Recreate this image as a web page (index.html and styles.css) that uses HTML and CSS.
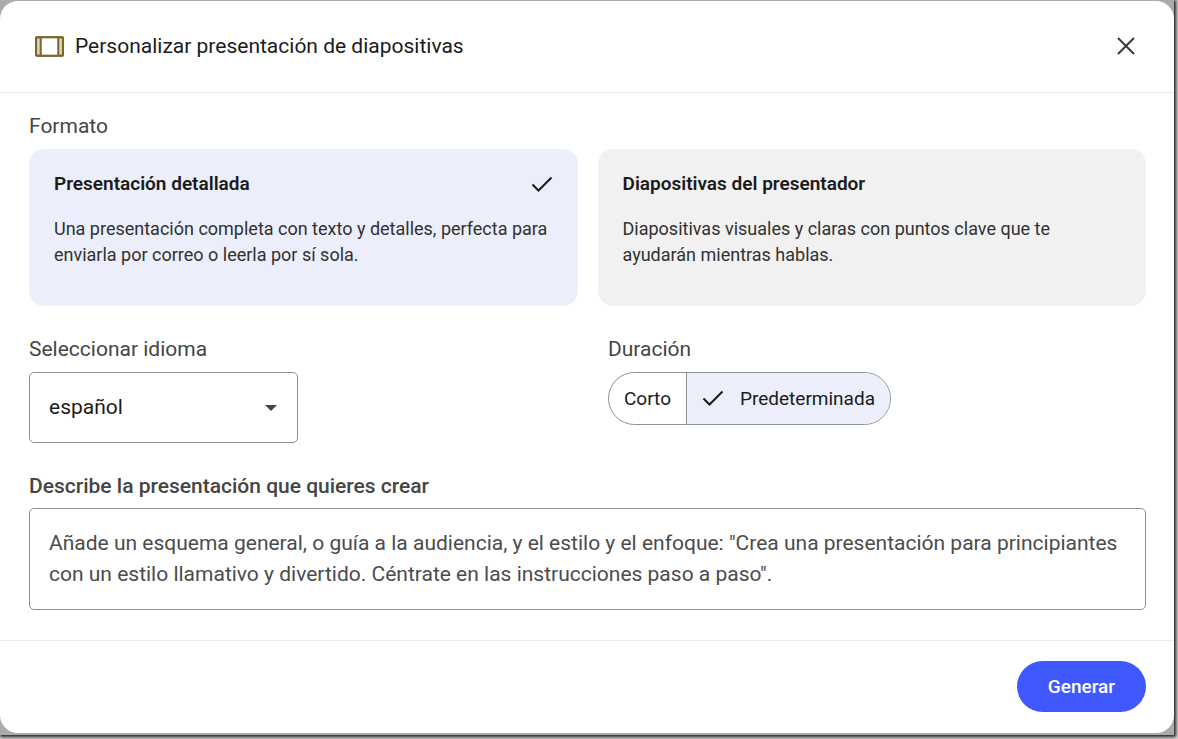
FILE: index.html
```html
<!DOCTYPE html>
<html lang="es">
<head>
<meta charset="utf-8">
<meta name="viewport" content="width=device-width, initial-scale=1">
<title>Personalizar presentación de diapositivas</title>
<link rel="stylesheet" href="styles.css">
</head>
<body>
<div class="backdrop">
  <form class="dialog" role="dialog" aria-labelledby="dialog-title">
    <header class="header">
      <svg class="slides-icon" viewBox="0 0 28 20" aria-hidden="true">
        <rect class="slides-fill" x="1" y="1" width="26" height="18" rx="1"/>
        <rect class="slides-page" x="6" y="2" width="16" height="16"/>
        <rect x="1" y="1" width="26" height="18" rx="1"/>
        <path d="M5.500 1v18M22.500 1v18"/>
      </svg>
      <h1 class="title" id="dialog-title">Personalizar presentación de diapositivas</h1>
      <button class="close" type="button" aria-label="Cerrar">
        <svg viewBox="0 0 18 18" aria-hidden="true"><path d="M1 1l16 16M17 1L1 17"/></svg>
      </button>
    </header>

    <main class="content">
      <fieldset class="group">
        <legend class="label">Formato</legend>
        <div class="cards">
          <label class="card">
            <input class="hidden-input" type="radio" name="formato" checked>
            <span class="card-head">
              <span class="card-title">Presentación detallada</span>
              <svg class="check" viewBox="0 0 22 16" aria-hidden="true"><path d="M1.500 8.500l6 6L20.500 1.500"/></svg>
            </span>
            <span class="card-text">Una presentación completa con texto y detalles, perfecta para enviarla por correo o leerla por sí sola.</span>
          </label>
          <label class="card">
            <input class="hidden-input" type="radio" name="formato">
            <span class="card-head">
              <span class="card-title">Diapositivas del presentador</span>
              <svg class="check" viewBox="0 0 22 16" aria-hidden="true"><path d="M1.500 8.500l6 6L20.500 1.500"/></svg>
            </span>
            <span class="card-text">Diapositivas visuales y claras con puntos clave que te ayudarán mientras hablas.</span>
          </label>
        </div>
      </fieldset>

      <div class="options">
        <div class="group">
          <label class="label" for="idioma">Seleccionar idioma</label>
          <div class="select-box">
            <select class="select" id="idioma"><option>español</option></select>
            <svg class="arrow" viewBox="0 0 12 6" aria-hidden="true"><path d="M0 0h12L6 6z"/></svg>
          </div>
        </div>
        <fieldset class="group">
          <legend class="label">Duración</legend>
          <div class="segments">
            <label class="segment">
              <input class="hidden-input" type="radio" name="duracion">
              <svg class="check" viewBox="0 0 22 16" aria-hidden="true"><path d="M1.500 8.500l6 6L20.500 1.500"/></svg>
              <span>Corto</span>
            </label>
            <label class="segment">
              <input class="hidden-input" type="radio" name="duracion" checked>
              <svg class="check" viewBox="0 0 22 16" aria-hidden="true"><path d="M1.500 8.500l6 6L20.500 1.500"/></svg>
              <span>Predeterminada</span>
            </label>
          </div>
        </fieldset>
      </div>

      <div class="group">
        <label class="label label-strong" for="descripcion">Describe la presentación que quieres crear</label>
        <textarea class="description" id="descripcion" rows="2" placeholder="Añade un esquema general, o guía a la audiencia, y el estilo y el enfoque: &quot;Crea una presentación para principiantes con un estilo llamativo y divertido. Céntrate en las instrucciones paso a paso&quot;."></textarea>
      </div>
    </main>

    <footer class="footer">
      <button class="generate" type="submit">Generar</button>
    </footer>
  </form>
</div>
</body>
</html>
```
FILE: styles.css
```css
* {
  box-sizing: border-box;
}

body {
  margin: 0;
  min-height: 100vh;
  display: flex;
  padding: 0 4px 4px 0;
  background: #d4d4d4;
  color: #1b1b1c;
  font-family: Roboto, "Liberation Sans", sans-serif;
}

.backdrop {
  flex: 1;
  display: flex;
  padding: 1px 0 2px;
  background: #ababae;
  box-shadow: 1px 1px 3px 1px #222;
}

.dialog {
  flex: 1;
  display: flex;
  flex-direction: column;
  background: #fff;
  border-radius: 18px;
}

.header {
  display: flex;
  align-items: center;
  gap: 11px;
  height: 92px;
  padding: 0 33px 1px 35px;
  border-bottom: 1px solid #e3e7e9;
}

.slides-icon {
  width: 29px;
  height: 21px;
  fill: none;
  stroke: #7b6831;
  stroke-width: 2;
}

.slides-fill {
  fill: #e0d8b8;
}

.slides-page {
  fill: #fff;
  stroke: none;
}

.title {
  margin: 0;
  flex: 1;
  font-size: 21px;
  line-height: 28px;
  font-weight: 400;
}

.close {
  display: flex;
  padding: 6px;
  border: 0;
  background: none;
}

.close svg {
  width: 18px;
  height: 18px;
  fill: none;
  stroke: #38393a;
  stroke-width: 2;
}

.content {
  flex: 1;
  display: flex;
  flex-direction: column;
  gap: 29px;
  padding: 19px 28px 29px 29px;
}

.group {
  display: flex;
  flex-direction: column;
  min-width: 0;
  margin: 0;
  padding: 0;
  border: 0;
}

.label {
  padding: 0;
  margin-bottom: 9px;
  color: #444546;
  font-size: 21px;
  line-height: 28px;
}

.label-strong {
  margin-bottom: 8px;
  font-weight: 500;
}

.cards {
  display: grid;
  grid-template-columns: 1fr 1fr;
  gap: 20px;
}

.card {
  display: flex;
  flex-direction: column;
  gap: 20px;
  min-height: 157px;
  padding: 23px 20px 20px 25px;
  border-radius: 15px;
  background: #f1f1f1;
}

.card:has(:checked) {
  background: #eceefb;
}

.card-head {
  display: flex;
  align-items: center;
  justify-content: space-between;
  padding-right: 5px;
}

.card-title {
  font-size: 19px;
  line-height: 24px;
  font-weight: 600;
}

.card-text {
  color: #303132;
  font-size: 18px;
  line-height: 26px;
}

.check {
  display: none;
  width: 22px;
  height: 16px;
  fill: none;
  stroke: #1b1b1c;
  stroke-width: 2;
}

:checked ~ .check,
:checked ~ .card-head .check {
  display: block;
}

.hidden-input {
  position: absolute;
  opacity: 0;
  pointer-events: none;
}

.options {
  display: grid;
  grid-template-columns: 579fr 538fr;
}

.select-box {
  display: grid;
  align-items: center;
  width: 269px;
}

.select,
.arrow {
  grid-area: 1 / 1;
}

.select {
  width: 100%;
  height: 71px;
  padding: 0 19px 2px;
  border: 1px solid #8e8f90;
  border-radius: 5px;
  background: #fff;
  color: inherit;
  font: inherit;
  font-size: 21px;
  appearance: none;
}

.arrow {
  justify-self: end;
  width: 12px;
  height: 6px;
  margin-right: 21px;
  fill: #444546;
  pointer-events: none;
}

.segments {
  display: flex;
  align-self: flex-start;
  width: max-content;
  height: 53px;
  border: 1px solid #8e8f90;
  border-radius: 27px;
  overflow: hidden;
}

.segment {
  display: flex;
  align-items: center;
  gap: 16px;
  padding: 0 15px 1px;
  font-size: 19px;
}

.segment + .segment {
  border-left: 1px solid #8e8f90;
}

.segment:has(:checked) {
  background: #eceefb;
}

.description {
  display: block;
  width: 100%;
  height: 102px;
  padding: 19px;
  border: 1px solid #8e8f90;
  border-radius: 5px;
  color: inherit;
  font: inherit;
  font-size: 21px;
  line-height: 31px;
  resize: none;
}

.description::placeholder {
  color: #4b4c4d;
  opacity: 1;
}

.footer {
  display: flex;
  justify-content: flex-end;
  padding: 20px 28px 21px;
  border-top: 1px solid #ebebed;
}

.generate {
  height: 51px;
  padding: 0 31px;
  border: 0;
  border-radius: 26px;
  background: #4058ff;
  color: #fff;
  font: inherit;
  font-size: 19px;
  font-weight: 500;
}
```
